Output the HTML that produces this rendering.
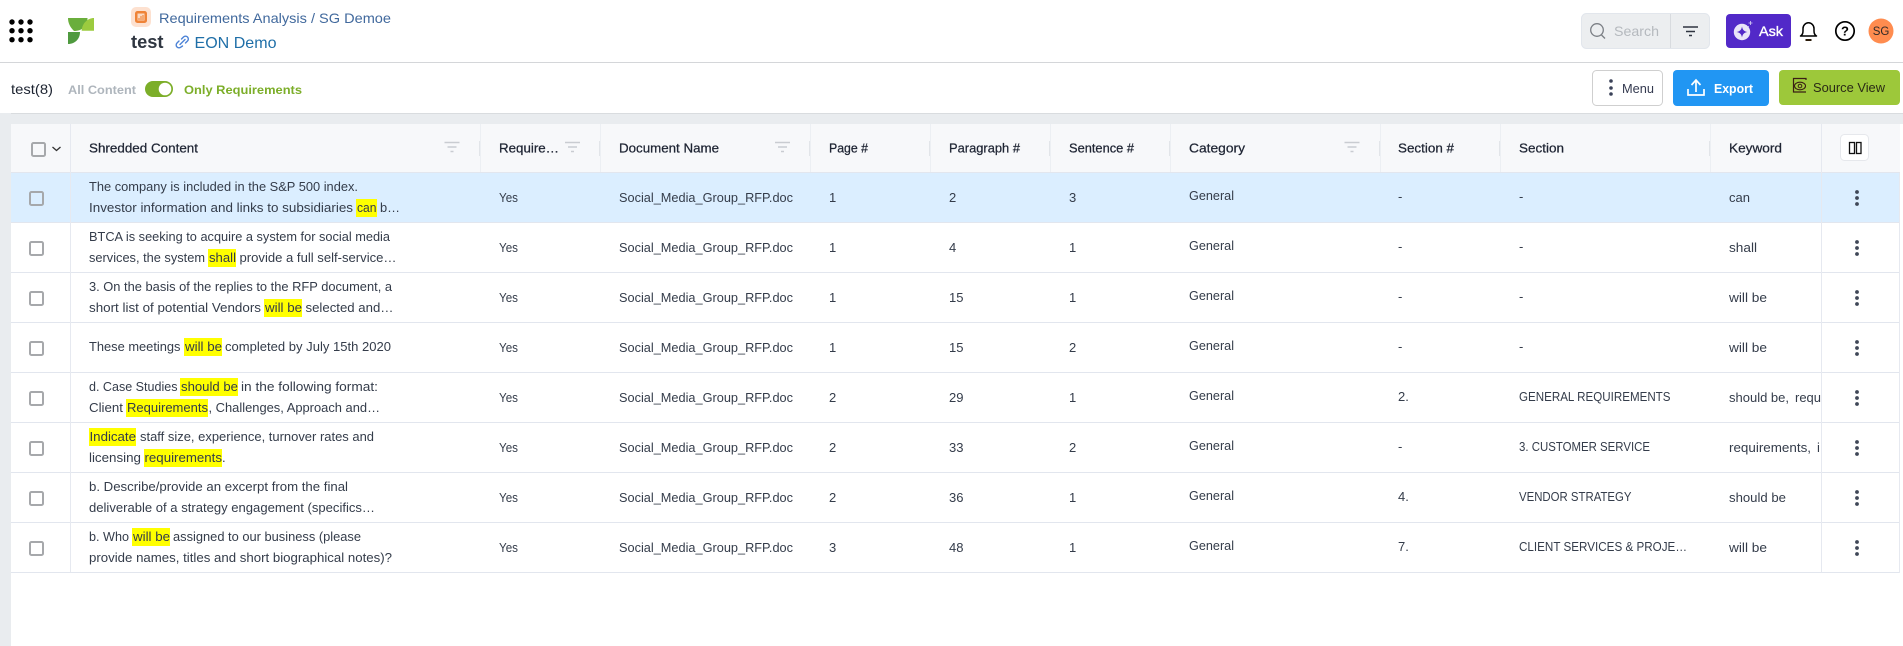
<!DOCTYPE html>
<html lang="en"><head><meta charset="utf-8"><title>Requirements Analysis</title>
<style>
html,body{margin:0;padding:0;background:#fff;width:1903px;height:646px;overflow:hidden}
svg{display:block}
text{font-family:"Liberation Sans",sans-serif;white-space:pre}
.b{font-size:13px;fill:#343c4a}
.h{font-size:13px;fill:#1e2433;stroke:#1e2433;stroke-width:.25}
.c{font-size:13px;fill:#343c4a}
.cb{fill:none;stroke:#a6a8ab;stroke-width:2}
</style></head><body>
<svg width="1903" height="646" viewBox="0 0 1903 646" xmlns="http://www.w3.org/2000/svg">
<!-- page -->
<rect width="1903" height="646" fill="#fff"/>
<rect y="62" width="1903" height="1" fill="#d4d6d9"/>
<rect y="113" width="1903" height="11" fill="#e9ecef"/>
<rect y="113" width="1903" height="1" fill="#d9dcdf"/>
<rect y="113" width="11" height="533" fill="#e9ecef"/>

<!-- app grid -->
<g fill="#000"><circle cx="12" cy="22" r="2.7"/><circle cx="21" cy="22" r="2.7"/><circle cx="30" cy="22" r="2.7"/><circle cx="12" cy="30.7" r="2.7"/><circle cx="21" cy="30.7" r="2.7"/><circle cx="30" cy="30.7" r="2.7"/><circle cx="12" cy="39.7" r="2.7"/><circle cx="21" cy="39.7" r="2.7"/><circle cx="30" cy="39.7" r="2.7"/></g>
<!-- logo -->
<path d="M68 18H87.500C87.500 26 82 31 74 31C70 27 68 23 68 18Z" fill="#6aae3c"/>
<path d="M94 18V30.700H81.700C82 23 88 18 94 18Z" fill="#9ccb3f"/>
<path d="M68 32H80C80 39 75 44 68 44Z" fill="#4f9a3f"/>

<!-- project icon -->
<rect x="131" y="7" width="20" height="20" rx="5" fill="#fde1d0"/>
<rect x="135" y="11" width="12" height="12" rx="2.500" fill="#ef8337"/>
<rect x="137.500" y="13.500" width="7" height="7" fill="#fbd9c2"/>
<path d="M139 20v-2M141 20v-4M143 20v-5" stroke="#ef8337" stroke-width="1.100"/>
<text x="159" y="23" font-size="14" fill="#41699d" textLength="232" lengthAdjust="spacingAndGlyphs">Requirements Analysis / SG Demoe</text>
<text x="131" y="48" font-size="18" font-weight="bold" fill="#2f3641" textLength="32.500" lengthAdjust="spacingAndGlyphs">test</text>
<g fill="none" stroke="#4b82d6" stroke-width="1.400" stroke-linecap="round" transform="translate(0,.5)"><path d="M181.500 38.500l2-2a2.800 2.800 0 0 1 4 4l-2 2"/><path d="M182.500 45.500l-1.500 1a2.800 2.800 0 0 1-4-4l2-2"/><path d="M180 44l5-5"/></g>
<text x="194.500" y="48" font-size="16" fill="#1f6fa8" textLength="82" lengthAdjust="spacingAndGlyphs">EON Demo</text>

<!-- search -->
<rect x="1581.500" y="13.500" width="128" height="35" rx="5" fill="#eceef0" stroke="#e2e6ec"/>
<rect x="1670" y="14" width="1" height="34" fill="#d8dbdf"/>
<circle cx="1597" cy="30" r="6.300" fill="none" stroke="#7b7f85" stroke-width="1.300"/><path d="M1601.500 35l3.500 3.500" stroke="#7b7f85" stroke-width="1.300"/>
<text x="1614" y="36" font-size="14" fill="#b5b9be" textLength="45" lengthAdjust="spacingAndGlyphs">Search</text>
<path d="M1683 27h15M1686 31.500h9M1689 35.500h3" stroke="#2f3440" stroke-width="1.500"/>
<!-- ask -->
<rect x="1726" y="14" width="65" height="34" rx="4" fill="#5229c8"/>
<circle cx="1742" cy="32" r="8.200" fill="#e9e4f8"/>
<path d="M1742 26.500c.7 3.500 2 4.800 5.500 5.500-3.500.7-4.800 2-5.500 5.500-.7-3.500-2-4.800-5.500-5.500 3.500-.7 4.800-2 5.500-5.500Z" fill="#5229c8"/>
<path d="M1748 21l5 5" stroke="#5229c8" stroke-width="3"/>
<path d="M1748.500 23h4M1750.500 21v4M1748 26.500h1" stroke="#d8d0f5" stroke-width=".8"/>
<text x="1759" y="36" font-size="14" fill="#fff" stroke="#fff" stroke-width=".35" textLength="24" lengthAdjust="spacingAndGlyphs">Ask</text>
<!-- bell -->
<path d="M1800.500 36c2-1 2.500-3 2.500-5v-2.500a5.500 5.700 0 0 1 11 0v2.500c0 2 .5 4 2.500 5Z" fill="none" stroke="#000" stroke-width="1.500" stroke-linejoin="round"/>
<path d="M1805.500 40h6" stroke="#2a1a08" stroke-width="2"/>
<!-- help -->
<circle cx="1845" cy="31" r="9.200" fill="none" stroke="#000" stroke-width="1.700"/>
<text x="1845" y="35.500" font-size="13" font-weight="bold" fill="#000" text-anchor="middle">?</text>
<!-- avatar -->
<circle cx="1881" cy="31" r="12.500" fill="#ff8c4f"/>
<text x="1881" y="35" font-size="11.500" fill="#2f2a28" text-anchor="middle">SG</text>

<!-- toolbar -->
<text x="11" y="94" font-size="14" fill="#1c2330" textLength="42" lengthAdjust="spacingAndGlyphs">test(8)</text>
<text x="68" y="94" font-size="12" font-weight="bold" fill="#aeb5bc" textLength="68" lengthAdjust="spacingAndGlyphs">All Content</text>
<rect x="145" y="81" width="28" height="16" rx="8" fill="#7cae29"/><circle cx="165" cy="89" r="6.300" fill="#fff"/>
<text x="184" y="94" font-size="12" font-weight="bold" fill="#7cae29" textLength="118" lengthAdjust="spacingAndGlyphs">Only Requirements</text>

<rect x="1592.500" y="70.500" width="70" height="35" rx="4" fill="#fff" stroke="#cfcfcf"/>
<g fill="#3a4258"><circle cx="1611" cy="81" r="1.800"/><circle cx="1611" cy="88" r="1.800"/><circle cx="1611" cy="94" r="1.800"/></g>
<text x="1622" y="93" font-size="13" fill="#343a50" textLength="32" lengthAdjust="spacingAndGlyphs">Menu</text>
<rect x="1673" y="70" width="96" height="36" rx="4" fill="#2196f3"/>
<path d="M1688 89v6h16v-6M1696 92v-11M1691.500 85l4.500-5 4.500 5" fill="none" stroke="#fff" stroke-width="1.700"/>
<text x="1714" y="93" font-size="13" font-weight="bold" fill="#fff" textLength="39" lengthAdjust="spacingAndGlyphs">Export</text>
<rect x="1779" y="70" width="121" height="35" rx="4" fill="#9dc83a"/>
<path d="M1806 80v-1.500h-12.500v13.500h12.500M1793.500 78.500v13.500" fill="none" stroke="#3a1f14" stroke-width="1.200"/>
<ellipse cx="1800" cy="86" rx="5.500" ry="3.800" fill="none" stroke="#3a1f14" stroke-width="1.100"/><circle cx="1800" cy="86" r="1.800" fill="none" stroke="#3a1f14"/>
<text x="1813" y="92" font-size="13" fill="#2a2a16" textLength="72" lengthAdjust="spacingAndGlyphs">Source View</text>

<!-- table header -->
<rect x="11" y="124" width="1889" height="48" fill="#f7f8fa"/>
<rect x="11" y="172" width="1889" height="50" fill="#dbeeff"/>
<g fill="#e2e6ee">
<rect x="11" y="172" width="1889" height="1"/><rect x="11" y="222" width="1889" height="1"/><rect x="11" y="272" width="1889" height="1"/><rect x="11" y="322" width="1889" height="1"/><rect x="11" y="372" width="1889" height="1"/><rect x="11" y="422" width="1889" height="1"/><rect x="11" y="472" width="1889" height="1"/><rect x="11" y="522" width="1889" height="1"/><rect x="11" y="572" width="1889" height="1"/>
</g>
<g fill="#e6e9f0">
<rect x="70" y="124" width="1" height="448"/><rect x="1821" y="124" width="1" height="448"/>
<rect x="1899" y="173" width="1" height="400"/>
</g>
<g fill="#eceff3">
<rect x="480" y="124" width="1" height="48"/><rect x="600" y="124" width="1" height="48"/><rect x="810" y="124" width="1" height="48"/><rect x="930" y="124" width="1" height="48"/><rect x="1050" y="124" width="1" height="48"/><rect x="1170" y="124" width="1" height="48"/><rect x="1380" y="124" width="1" height="48"/><rect x="1500" y="124" width="1" height="48"/><rect x="1710" y="124" width="1" height="48"/>
</g>
<g fill="#e2e5e9">
<rect x="479" y="141" width="1" height="15"/><rect x="599" y="141" width="1" height="15"/><rect x="809" y="141" width="1" height="15"/><rect x="929" y="141" width="1" height="15"/><rect x="1049" y="141" width="1" height="15"/><rect x="1169" y="141" width="1" height="15"/><rect x="1379" y="141" width="1" height="15"/><rect x="1499" y="141" width="1" height="15"/><rect x="1709" y="141" width="1" height="15"/>
</g>
<rect x="32" y="143" width="13" height="13" rx="1.500" class="cb"/>
<path d="M52.500 147l4 3.500 4-3.500" fill="none" stroke="#333" stroke-width="1.300"/>
<g stroke="#c9ccd1" stroke-width="1.400">
<path d="M444.500 142.500h15M447.500 147h9M450.500 151.500h3"/>
<path d="M565 142.500h15M568 147h9M571 151.500h3"/>
<path d="M775 142.500h15M778 147h9M781 151.500h3"/>
<path d="M1344.500 142.500h15M1347.500 147h9M1350.500 151.500h3"/>
</g>
<text class="h" x="89" y="152.500" textLength="109" lengthAdjust="spacingAndGlyphs">Shredded Content</text>
<text class="h" x="499" y="152.500" textLength="60" lengthAdjust="spacingAndGlyphs">Require…</text>
<text class="h" x="619" y="152.500" textLength="100" lengthAdjust="spacingAndGlyphs">Document Name</text>
<text class="h" x="829" y="152.500" textLength="39" lengthAdjust="spacingAndGlyphs">Page #</text>
<text class="h" x="949" y="152.500" textLength="71" lengthAdjust="spacingAndGlyphs">Paragraph #</text>
<text class="h" x="1069" y="152.500" textLength="65" lengthAdjust="spacingAndGlyphs">Sentence #</text>
<text class="h" x="1189" y="152.500" textLength="56" lengthAdjust="spacingAndGlyphs">Category</text>
<text class="h" x="1398" y="152.500" textLength="56" lengthAdjust="spacingAndGlyphs">Section #</text>
<text class="h" x="1519" y="152.500" textLength="45" lengthAdjust="spacingAndGlyphs">Section</text>
<text class="h" x="1729" y="152.500" textLength="53" lengthAdjust="spacingAndGlyphs">Keyword</text>
<rect x="1840.500" y="134.500" width="28" height="26" rx="4" fill="#fff" stroke="#e6e8ec"/>
<rect x="1849.500" y="142.500" width="5" height="11" fill="none" stroke="#111" stroke-width="1.300"/><rect x="1856.500" y="142.500" width="4.500" height="11" fill="none" stroke="#111" stroke-width="1.300"/>

<!-- highlights -->
<g fill="#ffff00">
<rect x="356" y="199" width="21" height="18"/>
<rect x="208" y="249" width="28" height="18"/>
<rect x="264" y="299" width="38" height="18"/>
<rect x="184" y="338" width="38" height="18"/>
<rect x="180" y="378" width="58" height="18"/>
<rect x="126" y="399" width="82" height="18"/>
<rect x="89" y="428" width="47" height="18"/>
<rect x="144" y="449" width="78" height="18"/>
<rect x="132" y="528" width="38" height="18"/>
</g>

<!-- row 1 -->
<text class="b" x="89" y="191" textLength="269" lengthAdjust="spacingAndGlyphs">The company is included in the S&amp;P 500 index.</text>
<text class="b" x="89" y="212" textLength="264" lengthAdjust="spacingAndGlyphs">Investor information and links to subsidiaries</text>
<text class="b" x="357" y="212" textLength="19.500" lengthAdjust="spacingAndGlyphs">can</text>
<text class="b" x="380" y="212" textLength="20" lengthAdjust="spacingAndGlyphs">b…</text>
<!-- row 2 -->
<text class="b" x="89" y="241" textLength="301" lengthAdjust="spacingAndGlyphs">BTCA is seeking to acquire a system for social media</text>
<text class="b" x="89" y="262" textLength="116" lengthAdjust="spacingAndGlyphs">services, the system</text>
<text class="b" x="209" y="262" textLength="27" lengthAdjust="spacingAndGlyphs">shall</text>
<text class="b" x="239.500" y="262" textLength="157" lengthAdjust="spacingAndGlyphs">provide a full self-service…</text>
<!-- row 3 -->
<text class="b" x="89" y="291" textLength="303" lengthAdjust="spacingAndGlyphs">3. On the basis of the replies to the RFP document, a</text>
<text class="b" x="89" y="312" textLength="172" lengthAdjust="spacingAndGlyphs">short list of potential Vendors</text>
<text class="b" x="265" y="312" textLength="37" lengthAdjust="spacingAndGlyphs">will be</text>
<text class="b" x="305.500" y="312" textLength="88" lengthAdjust="spacingAndGlyphs">selected and…</text>
<!-- row 4 -->
<text class="b" x="89" y="351" textLength="91.500" lengthAdjust="spacingAndGlyphs">These meetings</text>
<text class="b" x="185" y="351" textLength="37" lengthAdjust="spacingAndGlyphs">will be</text>
<text class="b" x="225" y="351" textLength="166" lengthAdjust="spacingAndGlyphs">completed by July 15th 2020</text>
<!-- row 5 -->
<text class="b" x="89" y="391" textLength="88.500" lengthAdjust="spacingAndGlyphs">d. Case Studies</text>
<text class="b" x="181" y="391" textLength="57" lengthAdjust="spacingAndGlyphs">should be</text>
<text class="b" x="241" y="391" textLength="137" lengthAdjust="spacingAndGlyphs">in the following format:</text>
<text class="b" x="89" y="412" textLength="34" lengthAdjust="spacingAndGlyphs">Client</text>
<text class="b" x="127" y="412" textLength="81" lengthAdjust="spacingAndGlyphs">Requirements</text>
<text class="b" x="208.500" y="412" textLength="171.500" lengthAdjust="spacingAndGlyphs">, Challenges, Approach and…</text>
<!-- row 6 -->
<text class="b" x="89.500" y="441" textLength="46.500" lengthAdjust="spacingAndGlyphs">Indicate</text>
<text class="b" x="140" y="441" textLength="234" lengthAdjust="spacingAndGlyphs">staff size, experience, turnover rates and</text>
<text class="b" x="89" y="462" textLength="52" lengthAdjust="spacingAndGlyphs">licensing</text>
<text class="b" x="144.500" y="462" textLength="77.500" lengthAdjust="spacingAndGlyphs">requirements</text>
<text class="b" x="222" y="462">.</text>
<!-- row 7 -->
<text class="b" x="89" y="491" textLength="259" lengthAdjust="spacingAndGlyphs">b. Describe/provide an excerpt from the final</text>
<text class="b" x="89" y="512" textLength="286" lengthAdjust="spacingAndGlyphs">deliverable of a strategy engagement (specifics…</text>
<!-- row 8 -->
<text class="b" x="89" y="541" textLength="40" lengthAdjust="spacingAndGlyphs">b. Who</text>
<text class="b" x="133" y="541" textLength="37" lengthAdjust="spacingAndGlyphs">will be</text>
<text class="b" x="173" y="541" textLength="188" lengthAdjust="spacingAndGlyphs">assigned to our business (please</text>
<text class="b" x="89" y="562" textLength="303" lengthAdjust="spacingAndGlyphs">provide names, titles and short biographical notes)?</text>

<!-- checkboxes -->
<g>
<rect x="30" y="192" width="13" height="13" rx="1.500" class="cb"/>
<rect x="30" y="242" width="13" height="13" rx="1.500" class="cb"/>
<rect x="30" y="292" width="13" height="13" rx="1.500" class="cb"/>
<rect x="30" y="342" width="13" height="13" rx="1.500" class="cb"/>
<rect x="30" y="392" width="13" height="13" rx="1.500" class="cb"/>
<rect x="30" y="442" width="13" height="13" rx="1.500" class="cb"/>
<rect x="30" y="492" width="13" height="13" rx="1.500" class="cb"/>
<rect x="30" y="542" width="13" height="13" rx="1.500" class="cb"/>
</g>

<!-- Yes / Doc -->
<g>
<text class="c" x="499" y="202" textLength="19" lengthAdjust="spacingAndGlyphs">Yes</text><text class="c" x="499" y="252" textLength="19" lengthAdjust="spacingAndGlyphs">Yes</text><text class="c" x="499" y="302" textLength="19" lengthAdjust="spacingAndGlyphs">Yes</text><text class="c" x="499" y="352" textLength="19" lengthAdjust="spacingAndGlyphs">Yes</text><text class="c" x="499" y="402" textLength="19" lengthAdjust="spacingAndGlyphs">Yes</text><text class="c" x="499" y="452" textLength="19" lengthAdjust="spacingAndGlyphs">Yes</text><text class="c" x="499" y="502" textLength="19" lengthAdjust="spacingAndGlyphs">Yes</text><text class="c" x="499" y="552" textLength="19" lengthAdjust="spacingAndGlyphs">Yes</text>
<text class="c" x="619" y="202" textLength="174" lengthAdjust="spacingAndGlyphs">Social_Media_Group_RFP.doc</text><text class="c" x="619" y="252" textLength="174" lengthAdjust="spacingAndGlyphs">Social_Media_Group_RFP.doc</text><text class="c" x="619" y="302" textLength="174" lengthAdjust="spacingAndGlyphs">Social_Media_Group_RFP.doc</text><text class="c" x="619" y="352" textLength="174" lengthAdjust="spacingAndGlyphs">Social_Media_Group_RFP.doc</text><text class="c" x="619" y="402" textLength="174" lengthAdjust="spacingAndGlyphs">Social_Media_Group_RFP.doc</text><text class="c" x="619" y="452" textLength="174" lengthAdjust="spacingAndGlyphs">Social_Media_Group_RFP.doc</text><text class="c" x="619" y="502" textLength="174" lengthAdjust="spacingAndGlyphs">Social_Media_Group_RFP.doc</text><text class="c" x="619" y="552" textLength="174" lengthAdjust="spacingAndGlyphs">Social_Media_Group_RFP.doc</text>
</g>
<!-- Page / Para / Sentence -->
<g>
<text class="c" x="829" y="202">1</text><text class="c" x="829" y="252">1</text><text class="c" x="829" y="302">1</text><text class="c" x="829" y="352">1</text><text class="c" x="829" y="402">2</text><text class="c" x="829" y="452">2</text><text class="c" x="829" y="502">2</text><text class="c" x="829" y="552">3</text>
<text class="c" x="949" y="202">2</text><text class="c" x="949" y="252">4</text><text class="c" x="949" y="302">15</text><text class="c" x="949" y="352">15</text><text class="c" x="949" y="402">29</text><text class="c" x="949" y="452">33</text><text class="c" x="949" y="502">36</text><text class="c" x="949" y="552">48</text>
<text class="c" x="1069" y="202">3</text><text class="c" x="1069" y="252">1</text><text class="c" x="1069" y="302">1</text><text class="c" x="1069" y="352">2</text><text class="c" x="1069" y="402">1</text><text class="c" x="1069" y="452">2</text><text class="c" x="1069" y="502">1</text><text class="c" x="1069" y="552">1</text>
</g>
<!-- Category -->
<g>
<text class="c" x="1189" y="200" textLength="45" lengthAdjust="spacingAndGlyphs">General</text><text class="c" x="1189" y="250" textLength="45" lengthAdjust="spacingAndGlyphs">General</text><text class="c" x="1189" y="300" textLength="45" lengthAdjust="spacingAndGlyphs">General</text><text class="c" x="1189" y="350" textLength="45" lengthAdjust="spacingAndGlyphs">General</text><text class="c" x="1189" y="400" textLength="45" lengthAdjust="spacingAndGlyphs">General</text><text class="c" x="1189" y="450" textLength="45" lengthAdjust="spacingAndGlyphs">General</text><text class="c" x="1189" y="500" textLength="45" lengthAdjust="spacingAndGlyphs">General</text><text class="c" x="1189" y="550" textLength="45" lengthAdjust="spacingAndGlyphs">General</text>
</g>
<!-- Section # -->
<g>
<text class="c" x="1398" y="201">-</text><text class="c" x="1398" y="251">-</text><text class="c" x="1398" y="301">-</text><text class="c" x="1398" y="351">-</text><text class="c" x="1398" y="401">2.</text><text class="c" x="1398" y="451">-</text><text class="c" x="1398" y="501">4.</text><text class="c" x="1398" y="551">7.</text>
</g>
<!-- Section -->
<g>
<text class="c" x="1519" y="201">-</text><text class="c" x="1519" y="251">-</text><text class="c" x="1519" y="301">-</text><text class="c" x="1519" y="351">-</text>
<text class="c" x="1519" y="401" textLength="151.500" lengthAdjust="spacingAndGlyphs">GENERAL REQUIREMENTS</text>
<text class="c" x="1519" y="451" textLength="131" lengthAdjust="spacingAndGlyphs">3. CUSTOMER SERVICE</text>
<text class="c" x="1519" y="501" textLength="112.500" lengthAdjust="spacingAndGlyphs">VENDOR STRATEGY</text>
<text class="c" x="1519" y="551" textLength="168" lengthAdjust="spacingAndGlyphs">CLIENT SERVICES &amp; PROJE…</text>
</g>
<!-- Keyword -->
<g>
<text class="c" x="1729" y="202" textLength="21" lengthAdjust="spacingAndGlyphs">can</text>
<text class="c" x="1729" y="252" textLength="28" lengthAdjust="spacingAndGlyphs">shall</text>
<text class="c" x="1729" y="302" textLength="38" lengthAdjust="spacingAndGlyphs">will be</text>
<text class="c" x="1729" y="352" textLength="38" lengthAdjust="spacingAndGlyphs">will be</text>
<text class="c" x="1729" y="402" textLength="60" lengthAdjust="spacingAndGlyphs">should be,</text>
<text class="c" x="1795" y="402" textLength="26" lengthAdjust="spacingAndGlyphs">requ</text>
<text class="c" x="1729" y="452" textLength="82" lengthAdjust="spacingAndGlyphs">requirements,</text>
<text class="c" x="1817" y="452">i</text>
<text class="c" x="1729" y="502" textLength="57" lengthAdjust="spacingAndGlyphs">should be</text>
<text class="c" x="1729" y="552" textLength="38" lengthAdjust="spacingAndGlyphs">will be</text>
</g>
<!-- kebabs -->
<g fill="#3f4757">
<circle cx="1857" cy="192" r="1.900"/><circle cx="1857" cy="198" r="1.900"/><circle cx="1857" cy="204" r="1.900"/>
<circle cx="1857" cy="242" r="1.900"/><circle cx="1857" cy="248" r="1.900"/><circle cx="1857" cy="254" r="1.900"/>
<circle cx="1857" cy="292" r="1.900"/><circle cx="1857" cy="298" r="1.900"/><circle cx="1857" cy="304" r="1.900"/>
<circle cx="1857" cy="342" r="1.900"/><circle cx="1857" cy="348" r="1.900"/><circle cx="1857" cy="354" r="1.900"/>
<circle cx="1857" cy="392" r="1.900"/><circle cx="1857" cy="398" r="1.900"/><circle cx="1857" cy="404" r="1.900"/>
<circle cx="1857" cy="442" r="1.900"/><circle cx="1857" cy="448" r="1.900"/><circle cx="1857" cy="454" r="1.900"/>
<circle cx="1857" cy="492" r="1.900"/><circle cx="1857" cy="498" r="1.900"/><circle cx="1857" cy="504" r="1.900"/>
<circle cx="1857" cy="542" r="1.900"/><circle cx="1857" cy="548" r="1.900"/><circle cx="1857" cy="554" r="1.900"/>
</g>
</svg>
</body></html>
